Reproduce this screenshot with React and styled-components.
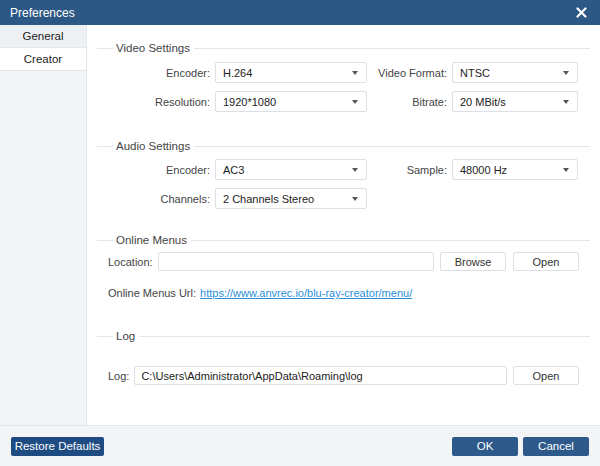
import React from 'react';
import styled, { createGlobalStyle } from 'styled-components';

const GlobalStyle = createGlobalStyle`
	html, body {
		margin: 0;
		padding: 0;
		background: #ffffff;
	}
	body {
		font-family: 'Liberation Sans', Arial, sans-serif;
		font-size: 11px;
		color: #333;
	}
`;

const Window = styled.div`
	width: 600px;
	height: 466px;
	display: flex;
	flex-direction: column;
	background: #fff;
	overflow: hidden;
`;

const TitleBar = styled.div`
	height: 25px;
	flex: none;
	background: #2c5885;
	color: #fff;
	display: flex;
	align-items: center;
	justify-content: space-between;
	padding: 0 12px 0 10px;
	font-size: 12px;
`;

const Close = styled.button`
	background: none;
	border: none;
	padding: 0;
	width: 12px;
	height: 12px;
	display: flex;
	cursor: pointer;
`;

const Body = styled.div`
	flex: 1;
	display: flex;
	min-height: 0;
`;

const Sidebar = styled.nav`
	width: 86px;
	flex: none;
	background: #f2f4f6;
	border-right: 1px solid #e3e6ea;
	display: flex;
	flex-direction: column;
`;

const Tab = styled.div`
	height: 22px;
	display: flex;
	align-items: center;
	justify-content: center;
	background: ${(p) => (p.active ? '#ffffff' : '#eef1f4')};
	border-bottom: 1px solid #e2e5e9;
	color: #222;
	font-size: 11.5px;
`;

const Content = styled.main`
	flex: 1;
	padding: 16px 10px 0 10px;
	display: flex;
	flex-direction: column;
`;

const Section = styled.section`
	margin-top: ${(p) => p.top || 0}px;
	display: flex;
	flex-direction: column;
`;

const Legend = styled.div`
	height: 14px;
	display: flex;
	align-items: center;
	color: #444;
	font-size: 11.5px;

	&::before {
		content: '';
		width: 16px;
		height: 1px;
		background: #e4e6e9;
		margin-right: 3px;
	}
	&::after {
		content: '';
		flex: 1;
		height: 1px;
		background: #e4e6e9;
		margin-left: 4px;
	}
`;

const Grid = styled.div`
	margin-top: ${(p) => p.top}px;
	display: grid;
	grid-template-columns: 113px 152px 75px 126px;
	column-gap: 5px;
	row-gap: 8px;
	align-items: center;
`;

const Label = styled.label`
	text-align: right;
	color: #444;
	white-space: nowrap;
`;

const SelectBox = styled.div`
	height: 21px;
	box-sizing: border-box;
	border: 1px solid #dcdfe3;
	border-radius: 2px;
	background: #fff;
	display: flex;
	align-items: center;
	justify-content: space-between;
	padding: 0 8px 0 7px;
	color: #222;
`;

const Caret = styled.span`
	width: 0;
	height: 0;
	border-left: 3.5px solid transparent;
	border-right: 3.5px solid transparent;
	border-top: 4px solid #555;
`;

const Row = styled.div`
	margin-top: ${(p) => p.top}px;
	display: flex;
	align-items: center;
	padding-left: 11px;
	padding-right: 11px;
`;

const RowLabel = styled.span`
	color: #444;
	margin-right: 5px;
`;

const TextInput = styled.div`
	flex: 1;
	height: 19px;
	box-sizing: border-box;
	border: 1px solid #dcdfe3;
	border-radius: 2px;
	background: #fff;
	display: flex;
	align-items: center;
	padding: 0 6px;
	color: #222;
	white-space: nowrap;
`;

const PlainButton = styled.button`
	width: 66px;
	height: 19px;
	box-sizing: border-box;
	border: 1px solid #dcdfe3;
	border-radius: 2px;
	background: #fff;
	color: #333;
	font-family: inherit;
	font-size: 11px;
	padding: 0;
	margin-left: ${(p) => p.gap || 6}px;
`;

const UrlLine = styled.div`
	margin-top: 15px;
	padding-left: 11px;
	height: 14px;
	display: flex;
	align-items: center;
	gap: 4px;
	color: #444;
`;

const Link = styled.a`
	color: #2a8fd8;
	text-decoration: underline;
`;

const Footer = styled.footer`
	height: 41px;
	flex: none;
	box-sizing: border-box;
	background: #f2f4f6;
	border-top: 1px solid #e3e6ea;
	display: flex;
	align-items: center;
	padding: 0 11px 0 11px;
	gap: 5px;
`;

const BlueButton = styled.button`
	height: 19px;
	padding: 0;
	width: ${(p) => (p.wide ? '93px' : '66px')};
	white-space: nowrap;
	border: none;
	border-radius: 2px;
	background: ${(p) => (p.dark ? '#1d4b82' : '#2e5a8b')};
	color: #fff;
	font-family: inherit;
	font-size: 11.5px;
	margin-right: ${(p) => (p.push ? 'auto' : '0')};
`;

const Select = ({ value }) => (
	<SelectBox>
		<span>{value}</span>
		<Caret />
	</SelectBox>
);

const Empty = styled.span``;

export default function App() {
	return (
		<>
			<GlobalStyle />
			<Window>
				<TitleBar>
					<span>Preferences</span>
					<Close aria-label="close">
						<svg width="11" height="11" viewBox="0 0 11 11">
							<path d="M1.5 1.5 L9.5 9.5 M9.5 1.5 L1.5 9.5" stroke="#fff" strokeWidth="2.2" strokeLinecap="round" />
						</svg>
					</Close>
				</TitleBar>
				<Body>
					<Sidebar>
						<Tab>General</Tab>
						<Tab active>Creator</Tab>
					</Sidebar>
					<Content>
						<Section>
							<Legend>Video Settings</Legend>
							<Grid top={7}>
								<Label>Encoder:</Label>
								<Select value="H.264" />
								<Label>Video Format:</Label>
								<Select value="NTSC" />
								<Label>Resolution:</Label>
								<Select value="1920*1080" />
								<Label>Bitrate:</Label>
								<Select value="20 MBit/s" />
							</Grid>
						</Section>
						<Section top={27}>
							<Legend>Audio Settings</Legend>
							<Grid top={6}>
								<Label>Encoder:</Label>
								<Select value="AC3" />
								<Label>Sample:</Label>
								<Select value="48000 Hz" />
								<Label>Channels:</Label>
								<Select value="2 Channels Stereo" />
								<Empty />
								<Empty />
							</Grid>
						</Section>
						<Section top={24}>
							<Legend>Online Menus</Legend>
							<Row top={5}>
								<RowLabel>Location:</RowLabel>
								<TextInput />
								<PlainButton>Browse</PlainButton>
								<PlainButton gap={7}>Open</PlainButton>
							</Row>
							<UrlLine>
								<span>Online Menus Url:</span>
								<Link href="#">https://www.anvrec.io/blu-ray-creator/menu/</Link>
							</UrlLine>
						</Section>
						<Section top={29}>
							<Legend>Log</Legend>
							<Row top={23}>
								<RowLabel>Log:</RowLabel>
								<TextInput>C:\Users\Administrator\AppData\Roaming\log</TextInput>
								<PlainButton>Open</PlainButton>
							</Row>
						</Section>
					</Content>
				</Body>
				<Footer>
					<BlueButton dark wide push>Restore Defaults</BlueButton>
					<BlueButton>OK</BlueButton>
					<BlueButton>Cancel</BlueButton>
				</Footer>
			</Window>
		</>
	);
}
